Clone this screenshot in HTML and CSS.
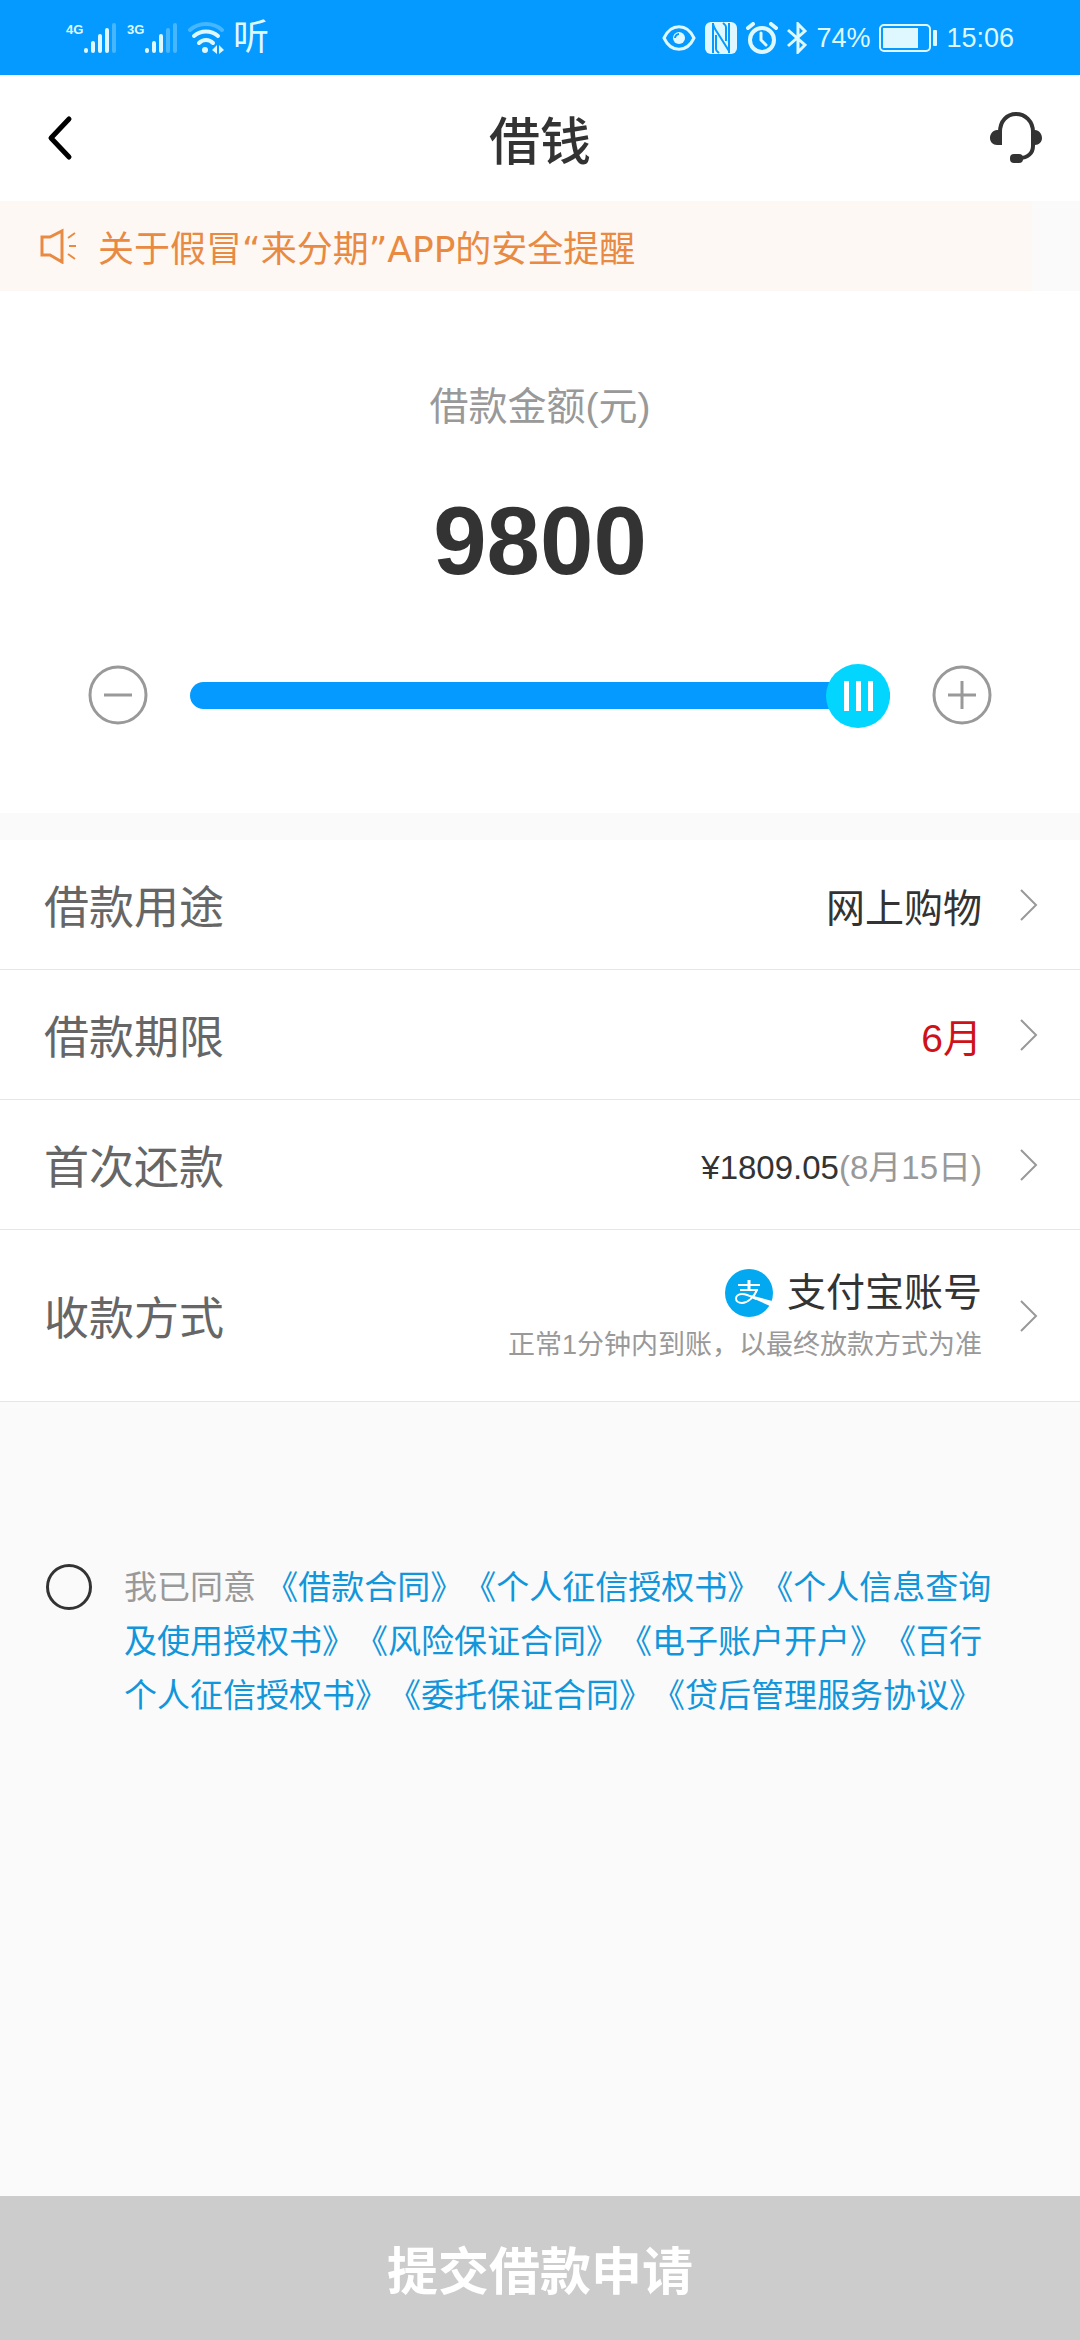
FILE: index.html
```html
<!DOCTYPE html>
<html lang="zh-CN">
<head>
<meta charset="utf-8">
<meta name="viewport" content="width=device-width, initial-scale=1">
<title>借钱</title>
<link rel="stylesheet" href="styles.css">
</head>
<body>
<div class="page">
  <div class="status">
    <div class="status-group">
      <div class="signal">
        <span class="signal-type">4G</span>
        <svg width="34" height="32" viewBox="0 0 34 32" stroke="currentColor" stroke-width="4" stroke-linecap="round"><path d="M2 28v1M9 21v8M16 14v15M23 8v21"/><path d="M30 3v26" opacity=".3"/></svg>
      </div>
      <div class="signal">
        <span class="signal-type">3G</span>
        <svg width="34" height="32" viewBox="0 0 34 32" stroke="currentColor" stroke-width="4" stroke-linecap="round"><path d="M2 28v1M9 21v8M16 14v15"/><path d="M23 8v21M30 3v26" opacity=".3"/></svg>
      </div>
      <svg width="36" height="32" viewBox="0 0 36 32" fill="none" stroke="currentColor" stroke-width="4" stroke-linecap="round"><path d="M2 8c9-8 23-8 32 0" opacity=".3"/><path d="M6 14c7-6 17-6 24 0M11 21c4-4 10-4 14 0"/><circle cx="17" cy="28" r="3" fill="currentColor" stroke="none"/><path d="M24 28l5-5v9zM36 28l-5-5v9z" fill="currentColor" stroke="none"/></svg>
      <span class="carrier">听</span>
    </div>
    <div class="status-group">
      <svg width="34" height="32" viewBox="0 0 34 32" fill="none" stroke="currentColor" stroke-width="3"><path d="M2 16C9 1 25 1 32 16C25 31 9 31 2 16z"/><circle cx="17" cy="16" r="6" fill="currentColor" stroke="none"/><path d="M13 16c0-2 2-4 4-4" stroke="#049aff" stroke-width="2"/></svg>
      <svg width="32" height="32" viewBox="0 0 32 32"><rect width="32" height="32" rx="6" fill="currentColor"/><path d="M8 1v30M8 2c1 4 2 5 4 8l12 19M24 31V1M11 13v14c0 2 2 3 3 4M21 19V5c0-2-2-3-3-4" fill="none" stroke="#049aff" stroke-width="2"/></svg>
      <svg width="32" height="32" viewBox="0 0 32 32" fill="none" stroke="currentColor" stroke-width="4" stroke-linecap="round"><circle cx="16" cy="18" r="12"/><path d="M2 6l5-4M30 6l-5-4"/><path d="M15 11v7l5 5" stroke-width="3"/></svg>
      <svg width="20" height="32" viewBox="0 0 20 32" fill="none" stroke="currentColor" stroke-width="3"><path d="M1 8l17 15-7 7V2l7 7L1 24"/></svg>
      <span class="status-text">74%</span>
      <svg width="58" height="28" viewBox="0 0 58 28"><rect x="1" y="1" width="50" height="26" rx="4" fill="none" stroke="currentColor" stroke-width="2"/><rect x="4" y="4" width="35" height="20" fill="currentColor"/><rect x="54" y="6" width="4" height="16" rx="1" fill="currentColor"/></svg>
      <span class="status-text">15:06</span>
    </div>
  </div>

  <header class="header">
    <button class="icon-button" type="button" aria-label="返回"><svg width="38" height="46" viewBox="0 0 38 46" fill="none" stroke="#000" stroke-width="5" stroke-linecap="round" stroke-linejoin="round"><path d="M31 4L13 23l18 19"/></svg></button>
    <h1 class="title">借钱</h1>
    <button class="icon-button" type="button" aria-label="客服"><svg width="52" height="52" viewBox="0 0 52 52" fill="none" stroke="#333" stroke-width="4"><path d="M10 20C10 9 17 2 26 2s17 7 17 18v14c0 7-5 12-14 12"/><path d="M12 18v15H7c-4 0-7-3-7-7s3-8 7-8zM41 18v15h4c4 0 7-3 7-7s-3-8-7-8z" fill="#333" stroke="none"/><rect x="20" y="42" width="13" height="9" rx="4" fill="#333" stroke="none"/></svg></button>
  </header>

  <div class="notice-bar">
    <a class="notice" href="#notice">
      <svg width="38" height="36" viewBox="0 0 38 36" fill="none" stroke="currentColor" stroke-width="3"><path d="M2 9h8L22 3v31l-12-7H2z"/><path d="M28 10l7-5M29 18h7M28 26l7 5" stroke-width="2"/></svg>
      <span>关于假冒“来分期”APP的安全提醒</span>
    </a>
  </div>

  <section class="amount">
    <label class="amount-label" for="amount">借款金额(元)</label>
    <output class="amount-value" for="amount">9800</output>
    <div class="amount-control">
      <button class="step" type="button" aria-label="减少"><svg width="60" height="60" viewBox="0 0 60 60" fill="none" stroke="#999" stroke-width="3"><circle cx="30" cy="30" r="28"/><path d="M16 30h28"/></svg></button>
      <input class="slider" id="amount" type="range" min="500" max="9800" value="9800">
      <button class="step" type="button" aria-label="增加"><svg width="60" height="60" viewBox="0 0 60 60" fill="none" stroke="#999" stroke-width="3"><circle cx="30" cy="30" r="28"/><path d="M16 30h28M30 16v28"/></svg></button>
    </div>
  </section>

  <section class="rows">
    <button class="row" type="button">
      <span class="row-label">借款用途</span>
      <span class="row-value">网上购物</span>
      <svg class="chevron" viewBox="0 0 18 32"><path d="M1 1l15 15L1 31"/></svg>
    </button>
    <button class="row" type="button">
      <span class="row-label">借款期限</span>
      <span class="row-value row-value-red">6月</span>
      <svg class="chevron" viewBox="0 0 18 32"><path d="M1 1l15 15L1 31"/></svg>
    </button>
    <button class="row" type="button">
      <span class="row-label">首次还款</span>
      <span class="row-value row-value-money">¥1809.05<span class="muted">(8月15日)</span></span>
      <svg class="chevron" viewBox="0 0 18 32"><path d="M1 1l15 15L1 31"/></svg>
    </button>
    <button class="row row-tall" type="button">
      <span class="row-label">收款方式</span>
      <span class="payee">
        <span class="payee-name">
          <svg width="48" height="48" viewBox="0 0 48 48" fill="none" stroke="#fff"><circle cx="24" cy="24" r="24" fill="#02a9f1" stroke="none"/><path d="M13 16h22M15 21h18" stroke-width="2"/><path d="M24 11v10" stroke-width="3"/><path d="M32 21c-3 7-9 13-15 13-8 0-8-9 0-9 5 0 10 3 14 5" stroke-width="2"/><path d="M25 26l22 6-2 5-20-9z" fill="#fff" stroke="none"/></svg>
          <span>支付宝账号</span>
        </span>
        <span class="payee-note">正常1分钟内到账，以最终放款方式为准</span>
      </span>
      <svg class="chevron" viewBox="0 0 18 32"><path d="M1 1l15 15L1 31"/></svg>
    </button>
  </section>

  <section class="agreement">
    <input class="agree-box" id="agree" type="checkbox">
    <p class="agree-text"><label for="agree">我已同意</label> <a href="#a1">《借款合同》</a><a href="#a2">《个人征信授权书》</a><a href="#a3">《个人信息查询及使用授权书》</a><a href="#a4">《风险保证合同》</a><a href="#a5">《电子账户开户》</a><a href="#a6">《百行个人征信授权书》</a><a href="#a7">《委托保证合同》</a><a href="#a8">《贷后管理服务协议》</a></p>
  </section>

  <button class="submit" type="submit">提交借款申请</button>
</div>
</body>
</html>
```

FILE: styles.css
```css
* {
  box-sizing: border-box;
}

body {
  margin: 0;
  background: #fafafa;
  color: #333;
  font-family: "Liberation Sans", "Noto Sans CJK SC", sans-serif;
  text-spacing-trim: space-all;
}

button {
  margin: 0;
  padding: 0;
  border: 0;
  background: none;
  color: inherit;
  font: inherit;
}

svg {
  display: block;
  flex: none;
}

.page {
  display: flex;
  flex-direction: column;
  min-height: 100vh;
}

/* status bar */
.status {
  display: flex;
  justify-content: space-between;
  align-items: center;
  height: 75px;
  padding: 0 66px;
  background: #049aff;
  color: #dff8ff;
}

.status-group {
  display: flex;
  align-items: center;
  gap: 9px;
}

.signal {
  display: flex;
  align-items: flex-start;
}

.signal-type {
  width: 18px;
  font-size: 13px;
  font-weight: 700;
  line-height: 16px;
}

.carrier {
  font-size: 36px;
  line-height: 40px;
}

.status-text {
  font-size: 27px;
  line-height: 40px;
}

/* title bar */
.header {
  display: flex;
  justify-content: space-between;
  align-items: center;
  height: 126px;
  padding: 0 38px;
  background: #fff;
}

.icon-button {
  display: flex;
  flex: 1;
}

.icon-button:last-child {
  justify-content: flex-end;
}

.title {
  margin: 0;
  padding-top: 10px;
  font-size: 51px;
  font-weight: 500;
  line-height: 60px;
}

/* notice */
.notice-bar {
  padding-right: 48px;
}

.notice {
  display: flex;
  align-items: center;
  gap: 20px;
  height: 90px;
  padding-left: 40px;
  background: #fef8f4;
  color: #e88a42;
  font-family: "DejaVu Sans", "Noto Sans CJK SC", sans-serif;
  font-size: 36px;
  text-decoration: none;
}

/* amount */
.amount {
  display: flex;
  flex-direction: column;
  align-items: center;
  padding: 89px 88px 86px;
  background: #fff;
}

.amount-label {
  color: #999;
  font-size: 39px;
  line-height: 54px;
}

.amount-value {
  margin: 47px 0 62px;
  font-size: 96px;
  font-weight: 700;
  line-height: 120px;
}

.amount-control {
  display: flex;
  align-items: center;
  gap: 42px;
  width: 100%;
}

.slider {
  flex: 1;
  min-width: 0;
  height: 64px;
  margin: 0;
  background: none;
  appearance: none;
}

.slider::-webkit-slider-runnable-track {
  height: 27px;
  border-radius: 14px;
  background: #049aff;
}

.slider::-webkit-slider-thumb {
  width: 64px;
  height: 64px;
  margin-top: -18px;
  border-radius: 50%;
  background:
    linear-gradient(#fff, #fff) 18px 50% / 5px 30px no-repeat,
    linear-gradient(#fff, #fff) 30px 50% / 5px 30px no-repeat,
    linear-gradient(#fff, #fff) 42px 50% / 5px 30px no-repeat,
    #02d6ff;
  appearance: none;
}

/* detail rows */
.rows {
  margin-top: 27px;
  background: #fff;
}

.row {
  display: flex;
  align-items: center;
  width: 100%;
  height: 130px;
  padding: 0 42px 0 44px;
  border-bottom: 1px solid #e6e6e6;
  text-align: left;
}

.row-tall {
  height: 172px;
}

.row-label {
  flex: 1;
  color: #666;
  font-size: 45px;
}

.row-value {
  font-size: 39px;
}

.row-value-red {
  color: #cf1217;
}

.row-value-money {
  font-size: 33px;
}

.muted {
  color: #999;
}

.chevron {
  width: 18px;
  height: 32px;
  margin-left: 38px;
  fill: none;
  stroke: #999;
  stroke-width: 2;
}

.payee {
  display: flex;
  flex-direction: column;
  align-items: flex-end;
}

.payee-name {
  display: flex;
  align-items: center;
  gap: 14px;
  font-size: 39px;
  line-height: 60px;
}

.payee-note {
  color: #999;
  font-size: 27px;
  line-height: 45px;
}

/* agreement */
.agreement {
  display: flex;
  align-items: flex-start;
  gap: 32px;
  padding: 159px 74px 54px 46px;
}

.agree-box {
  flex: none;
  width: 46px;
  height: 46px;
  margin: 3px 0 0;
  border: 3px solid #333;
  border-radius: 50%;
  appearance: none;
}

.agree-box:checked {
  background: #049aff;
}

.agree-text {
  margin: 0;
  color: #999;
  font-size: 33px;
  line-height: 54px;
}

.agree-text a {
  color: #1296db;
  text-decoration: none;
}

/* submit */
.submit {
  height: 144px;
  margin-top: auto;
  background: #ccc;
  color: #fff;
  font-size: 51px;
  font-weight: 700;
}
```
